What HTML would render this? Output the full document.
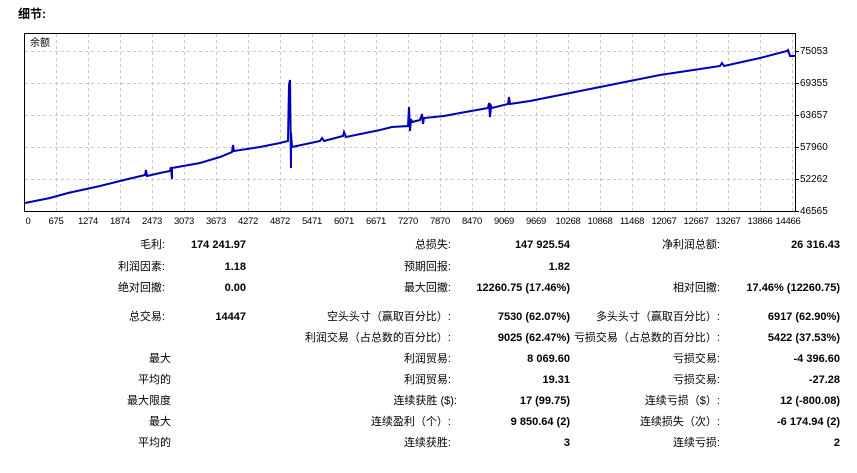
<!DOCTYPE html>
<html><head><meta charset="utf-8"><style>
body{margin:0;width:857px;height:473px;background:#fff;font-family:"Liberation Sans","Noto Sans CJK SC",sans-serif;font-size:11px;color:#000;position:relative;overflow:hidden}
.t{position:absolute;white-space:nowrap;line-height:14px}
.r{text-align:right}
.b{font-weight:bold}
</style></head><body>
<div class="t b" style="left:18px;top:7px;font-size:12px">细节:</div>
<svg style="position:absolute;left:0;top:0" width="857" height="230">
<g stroke="#c8c8c8" stroke-dasharray="3,3" stroke-width="1">
<line x1="56.5" y1="34" x2="56.5" y2="212"/><line x1="88.5" y1="34" x2="88.5" y2="212"/><line x1="120.5" y1="34" x2="120.5" y2="212"/><line x1="152.5" y1="34" x2="152.5" y2="212"/><line x1="184.5" y1="34" x2="184.5" y2="212"/><line x1="216.5" y1="34" x2="216.5" y2="212"/><line x1="248.5" y1="34" x2="248.5" y2="212"/><line x1="280.5" y1="34" x2="280.5" y2="212"/><line x1="312.5" y1="34" x2="312.5" y2="212"/><line x1="344.5" y1="34" x2="344.5" y2="212"/><line x1="376.5" y1="34" x2="376.5" y2="212"/><line x1="408.5" y1="34" x2="408.5" y2="212"/><line x1="440.5" y1="34" x2="440.5" y2="212"/><line x1="472.5" y1="34" x2="472.5" y2="212"/><line x1="504.5" y1="34" x2="504.5" y2="212"/><line x1="536.5" y1="34" x2="536.5" y2="212"/><line x1="568.5" y1="34" x2="568.5" y2="212"/><line x1="600.5" y1="34" x2="600.5" y2="212"/><line x1="632.5" y1="34" x2="632.5" y2="212"/><line x1="664.5" y1="34" x2="664.5" y2="212"/><line x1="696.5" y1="34" x2="696.5" y2="212"/><line x1="728.5" y1="34" x2="728.5" y2="212"/><line x1="760.5" y1="34" x2="760.5" y2="212"/><line x1="792.5" y1="34" x2="792.5" y2="212"/>
<line x1="25" y1="51.5" x2="795" y2="51.5"/><line x1="25" y1="83.5" x2="795" y2="83.5"/><line x1="25" y1="115.5" x2="795" y2="115.5"/><line x1="25" y1="147.5" x2="795" y2="147.5"/><line x1="25" y1="179.5" x2="795" y2="179.5"/>
</g>
<rect x="24.5" y="33.5" width="771" height="178" fill="none" stroke="#000"/>
<g stroke="#000"><line x1="796" y1="51.5" x2="799" y2="51.5"/><line x1="796" y1="83.5" x2="799" y2="83.5"/><line x1="796" y1="115.5" x2="799" y2="115.5"/><line x1="796" y1="147.5" x2="799" y2="147.5"/><line x1="796" y1="179.5" x2="799" y2="179.5"/><line x1="796" y1="211.5" x2="799" y2="211.5"/></g>
<polyline fill="none" stroke="#0000b4" stroke-width="2" points="25,203 50,198 68,193 100,186 120,181 145,175 146,170 147,176 160,173 170,171 171,167 172,179 172,168 200,163 220,157 232,152 233,145 234,151 260,147 280,143 288,141 289,85 290,80 291,168 291,133 292,147 320,141 322,138 324,141 343,136 344,132 346,137 380,130 392,127 408,126 409,107 410,131 411,119 412,122 420,120 422,114 423,124 424,118 444,116 460,113 488,108 489,103 490,117 491,106 492,108 508,104 509,97 510,104 530,101 560,95 600,87 630,81 660,75 700,69 720,66 722,63 724,66 760,58 787,51 788,50 790,56 796,56"/>
<text x="30" y="46" font-size="10" font-family="Liberation Sans,Noto Sans CJK SC,sans-serif">余额</text>
<g font-size="10" font-family="Liberation Sans,sans-serif">
<text x="800" y="54">75053</text><text x="800" y="86">69355</text><text x="800" y="118">63657</text><text x="800" y="150">57960</text><text x="800" y="182">52262</text><text x="800" y="214">46565</text>
</g>
<g font-size="9.5" font-family="Liberation Sans,sans-serif" text-anchor="middle" letter-spacing="-0.3">
<text x="28" y="224">0</text><text x="56" y="224">675</text><text x="88" y="224">1274</text><text x="120" y="224">1874</text><text x="152" y="224">2473</text><text x="184" y="224">3073</text><text x="216" y="224">3673</text><text x="248" y="224">4272</text><text x="280" y="224">4872</text><text x="312" y="224">5471</text><text x="344" y="224">6071</text><text x="376" y="224">6671</text><text x="408" y="224">7270</text><text x="440" y="224">7870</text><text x="472" y="224">8470</text><text x="504" y="224">9069</text><text x="536" y="224">9669</text><text x="568" y="224">10268</text><text x="600" y="224">10868</text><text x="632" y="224">11468</text><text x="664" y="224">12067</text><text x="696" y="224">12667</text><text x="728" y="224">13267</text><text x="760" y="224">13866</text><text x="788" y="224">14466</text>
</g>
</svg>

<div class="t r" style="right:692px;top:238px">毛利:</div><div class="t r b" style="right:611px;top:238px">174 241.97</div>
<div class="t r" style="right:406px;top:238px">总损失:</div><div class="t r b" style="right:287px;top:238px">147 925.54</div>
<div class="t r" style="right:137px;top:238px">净利润总额:</div><div class="t r b" style="right:17px;top:238px">26 316.43</div>

<div class="t r" style="right:692px;top:260px">利润因素:</div><div class="t r b" style="right:611px;top:260px">1.18</div>
<div class="t r" style="right:406px;top:260px">预期回报:</div><div class="t r b" style="right:287px;top:260px">1.82</div>

<div class="t r" style="right:692px;top:281px">绝对回撤:</div><div class="t r b" style="right:611px;top:281px">0.00</div>
<div class="t r" style="right:406px;top:281px">最大回撤:</div><div class="t r b" style="right:287px;top:281px">12260.75 (17.46%)</div>
<div class="t r" style="right:137px;top:281px">相对回撤:</div><div class="t r b" style="right:17px;top:281px">17.46% (12260.75)</div>

<div class="t r" style="right:692px;top:310px">总交易:</div><div class="t r b" style="right:611px;top:310px">14447</div>
<div class="t r" style="right:406px;top:310px">空头头寸（赢取百分比）:</div><div class="t r b" style="right:287px;top:310px">7530 (62.07%)</div>
<div class="t r" style="right:137px;top:310px">多头头寸（赢取百分比）:</div><div class="t r b" style="right:17px;top:310px">6917 (62.90%)</div>

<div class="t r" style="right:406px;top:331px">利润交易（占总数的百分比）:</div><div class="t r b" style="right:287px;top:331px">9025 (62.47%)</div>
<div class="t r" style="right:137px;top:331px">亏损交易（占总数的百分比）:</div><div class="t r b" style="right:17px;top:331px">5422 (37.53%)</div>

<div class="t r" style="right:686px;top:352px">最大</div>
<div class="t r" style="right:406px;top:352px">利润贸易:</div><div class="t r b" style="right:287px;top:352px">8 069.60</div>
<div class="t r" style="right:137px;top:352px">亏损交易:</div><div class="t r b" style="right:17px;top:352px">-4 396.60</div>

<div class="t r" style="right:686px;top:373px">平均的</div>
<div class="t r" style="right:406px;top:373px">利润贸易:</div><div class="t r b" style="right:287px;top:373px">19.31</div>
<div class="t r" style="right:137px;top:373px">亏损交易:</div><div class="t r b" style="right:17px;top:373px">-27.28</div>

<div class="t r" style="right:686px;top:394px">最大限度</div>
<div class="t r" style="right:400px;top:394px">连续获胜 ($):</div><div class="t r b" style="right:287px;top:394px">17 (99.75)</div>
<div class="t r" style="right:137px;top:394px">连续亏损（$）:</div><div class="t r b" style="right:17px;top:394px">12 (-800.08)</div>

<div class="t r" style="right:686px;top:415px">最大</div>
<div class="t r" style="right:406px;top:415px">连续盈利（个）:</div><div class="t r b" style="right:287px;top:415px">9 850.64 (2)</div>
<div class="t r" style="right:137px;top:415px">连续损失（次）:</div><div class="t r b" style="right:17px;top:415px">-6 174.94 (2)</div>

<div class="t r" style="right:686px;top:436px">平均的</div>
<div class="t r" style="right:406px;top:436px">连续获胜:</div><div class="t r b" style="right:287px;top:436px">3</div>
<div class="t r" style="right:137px;top:436px">连续亏损:</div><div class="t r b" style="right:17px;top:436px">2</div>
</body></html>
